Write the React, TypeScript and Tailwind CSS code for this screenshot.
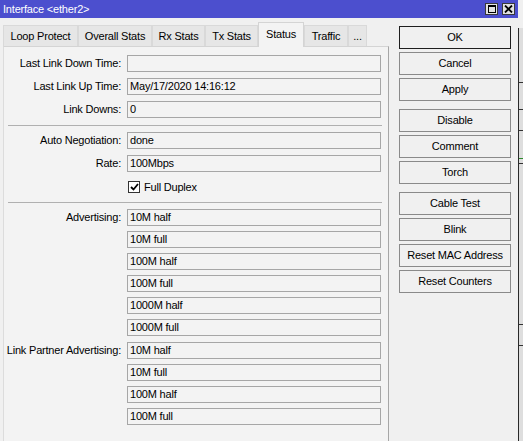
import React from "react";

const font = "font-['Liberation_Sans',Arial,sans-serif] text-[11px] tracking-[-0.2px]";

const tabs = [
  { name: "Loop Protect", w: "w-[75px]" },
  { name: "Overall Stats", w: "w-[74px]" },
  { name: "Rx Stats", w: "w-[53px]" },
  { name: "Tx Stats", w: "w-[53px]" },
  { name: "Status", w: "w-[46px]", active: true },
  { name: "Traffic", w: "w-[44px]" },
  { name: "...", w: "w-[19px]" },
];

function Field({ label, value, className = "" }: { label?: string; value: string; className?: string }) {
  return (
    <div className={`flex h-[17px] items-center ${className}`}>
      <div className="w-[118px] shrink-0 pr-[1px] text-right text-black">{label ? `${label}:` : ""}</div>
      <div className="ml-[5px] flex h-[17px] w-[254px] items-center border border-[#a6a6a6] bg-[#f3f3f3] pl-[2px] leading-[15px] text-black">
        {value}
      </div>
    </div>
  );
}

function Btn({ label, def, className = "" }: { label: string; def?: boolean; className?: string }) {
  return (
    <div
      className={`flex h-[23px] w-[112px] items-center justify-center border bg-[#f0f0f0] text-black ${
        def ? "border-[#1e1e1e]" : "border-[#8a8a8a]"
      } ${className}`}
    >
      {label}
    </div>
  );
}

function Separator({ className = "" }: { className?: string }) {
  return <div className={`ml-[4px] h-px w-[374px] bg-[#b0b0b0] ${className}`} />;
}

export default function App() {
  return (
    <div className={`flex h-[441px] w-[523px] overflow-hidden bg-[#f0f0f0] ${font}`}>
      <div className="flex h-full w-[518px] shrink-0 flex-col">
        {/* title bar */}
        <div className="flex h-[18px] shrink-0 items-center justify-between bg-[#4c4fce] pl-[3px] pr-[3px] text-white">
          <span className="leading-[18px]">Interface &lt;ether2&gt;</span>
          <div className="flex gap-[4px]">
            <div className="flex h-[12px] w-[13px] items-center justify-center border border-[#3a3a3a] bg-[#e2e2e2]">
              <div className="h-[8px] w-[8px] border border-black border-t-2" />
            </div>
            <div className="flex h-[12px] w-[13px] items-center justify-center border border-[#3a3a3a] bg-[#e2e2e2]">
              <svg width="9" height="8" viewBox="0 0 9 8">
                <path d="M1 0.5 L8 7.5 M8 0.5 L1 7.5" stroke="black" strokeWidth="1.8" />
              </svg>
            </div>
          </div>
        </div>

        <div className="flex min-h-0 flex-1">
          {/* left: tabs + panel */}
          <div className="ml-[3px] flex w-[386px] flex-col pt-[4px]">
            <div className="relative z-10 flex h-[24px] items-end">
              {tabs.map((t) =>
                t.active ? (
                  <div
                    key={t.name}
                    className={`${t.w} mb-[-1px] flex h-[25px] items-center justify-center border-x border-t border-[#d4d4d4] bg-[#f3f3f3] pb-[2px] text-black`}
                  >
                    {t.name}
                  </div>
                ) : (
                  <div
                    key={t.name}
                    className={`${t.w} flex h-[21px] items-center justify-center border-x border-t border-[#d9d9d9] bg-[#e6e6e6] text-black`}
                  >
                    {t.name}
                  </div>
                )
              )}
            </div>
            <div className="flex flex-1 flex-col border-l border-t border-r border-l-[#dcdcdc] border-t-[#d4d4d4] border-r-[#a6a6a6] bg-[#f3f3f3] pt-[8px]">
              <Field label="Last Link Down Time" value="" />
              <Field label="Last Link Up Time" value="May/17/2020 14:16:12" className="mt-[6px]" />
              <Field label="Link Downs" value="0" className="mt-[6px]" />
              <Separator className="mt-[7px]" />
              <Field label="Auto Negotiation" value="done" className="mt-[6px]" />
              <Field label="Rate" value="100Mbps" className="mt-[6px]" />
              <div className="mt-[9px] flex h-[12px] items-center pl-[124px]">
                <div className="flex h-[12px] w-[12px] items-center justify-center border border-[#333] bg-white">
                  <svg width="9" height="8" viewBox="0 0 9 8">
                    <path d="M1 4 L3.5 6.5 L8 1" fill="none" stroke="black" strokeWidth="1.8" />
                  </svg>
                </div>
                <span className="ml-[4px] text-black">Full Duplex</span>
              </div>
              <Separator className="mt-[9px]" />
              <Field label="Advertising" value="10M half" className="mt-[6px]" />
              <Field value="10M full" className="mt-[5px]" />
              <Field value="100M half" className="mt-[5px]" />
              <Field value="100M full" className="mt-[5px]" />
              <Field value="1000M half" className="mt-[5px]" />
              <Field value="1000M full" className="mt-[5px]" />
              <Field label="Link Partner Advertising" value="10M half" className="mt-[6px]" />
              <Field value="10M full" className="mt-[5px]" />
              <Field value="100M half" className="mt-[5px]" />
              <Field value="100M full" className="mt-[5px]" />
            </div>
          </div>

          {/* right: buttons */}
          <div className="ml-[10px] flex flex-col pt-[8px]">
            <Btn label="OK" def />
            <Btn label="Cancel" className="mt-[3px]" />
            <Btn label="Apply" className="mt-[3px]" />
            <Btn label="Disable" className="mt-[8px]" />
            <Btn label="Comment" className="mt-[3px]" />
            <Btn label="Torch" className="mt-[3px]" />
            <Btn label="Cable Test" className="mt-[8px]" />
            <Btn label="Blink" className="mt-[3px]" />
            <Btn label="Reset MAC Address" className="mt-[3px]" />
            <Btn label="Reset Counters" className="mt-[3px]" />
          </div>
        </div>
      </div>

      {/* edge of the window behind */}
      <div className="flex flex-1 flex-col pt-[28px]">
        <div className="flex flex-1">
          <div className="w-px bg-[#2a2a2a]" />
          <div className="flex flex-1 flex-col bg-[#dedede]">
            <div className="mt-[54px] h-px bg-[#333]" />
            <div className="mt-[26px] h-px bg-[#333]" />
            <div className="mt-[20px] h-px bg-[#333]" />
            <div className="mt-[27px] h-px bg-[#2e8b2e]" />
            <div className="mt-[4px] h-px bg-[#333]" />
            <div className="mt-[160px] h-px bg-[#333]" />
            <div className="mt-[20px] h-px bg-[#333]" />
          </div>
        </div>
      </div>
    </div>
  );
}
